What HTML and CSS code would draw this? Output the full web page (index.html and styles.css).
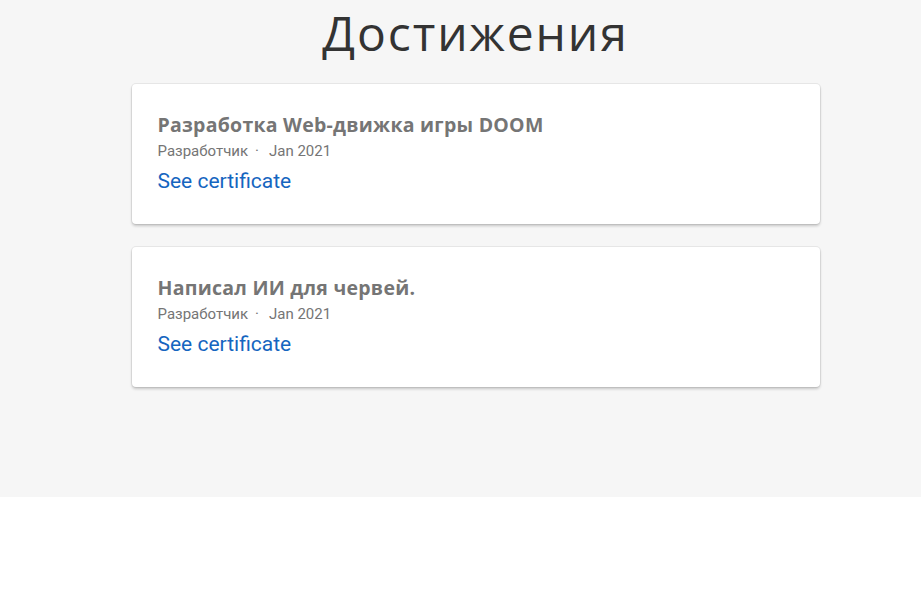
FILE: index.html
```html
<!DOCTYPE html>
<html lang="ru">
<head>
<meta charset="utf-8">
<link rel="stylesheet" href="styles.css">
</head>
<body>
<section class="achievements">
  <h1 class="section-title">Достижения</h1>
  <div class="cards">
    <article class="card">
      <h2 class="card-title">Разработка Web-движка игры DOOM</h2>
      <div class="card-meta"><span>Разработчик</span><span class="dot">·</span><span>Jan 2021</span></div>
      <a class="card-link" href="#">See certificate</a>
    </article>
    <article class="card">
      <h2 class="card-title">Написал ИИ для червей.</h2>
      <div class="card-meta"><span>Разработчик</span><span class="dot">·</span><span>Jan 2021</span></div>
      <a class="card-link" href="#">See certificate</a>
    </article>
  </div>
</section>
</body>
</html>
```
FILE: styles.css
```css
html, body {
  margin: 0;
  padding: 0;
  background: #ffffff;
}
body {
  font-family: Roboto, "Liberation Sans", sans-serif;
}
.achievements {
  background: #f6f6f6;
  height: 497px;
  box-sizing: border-box;
  padding: 0 0 0 30px;
}
.section-title {
  margin: 0;
  text-align: center;
  font-family: "Open Sans", "Noto Sans", sans-serif;
  font-weight: 400;
  font-size: 48px;
  letter-spacing: 1.9px;
  line-height: 66px;
  color: #333333;
}
.cards {
  width: 688px;
  margin: 18px auto 0;
  display: flex;
  flex-direction: column;
  gap: 23px;
}
.card {
  background: #ffffff;
  border-radius: 4px;
  box-shadow: 0 0 0 1px rgba(0,0,0,0.06), 0 2px 3px rgba(0,0,0,0.2);
  padding: 29px 26px;
  display: flex;
  flex-direction: column;
  align-items: flex-start;
}
.card-title {
  margin: 0;
  font-family: "Open Sans", "Noto Sans", sans-serif;
  font-weight: 700;
  font-size: 19.5px;
  letter-spacing: 0.25px;
  line-height: 24px;
  color: #757575;
}
.card-meta {
  margin-top: 4px;
  font-size: 15px;
  line-height: 20px;
  color: #757575;
  display: flex;
}
.dot {
  margin: 0 10px 0 7px;
}
.card-link {
  margin-top: 6px;
  font-size: 21px;
  line-height: 28px;
  color: #1565c0;
  text-decoration: none;
}
```
